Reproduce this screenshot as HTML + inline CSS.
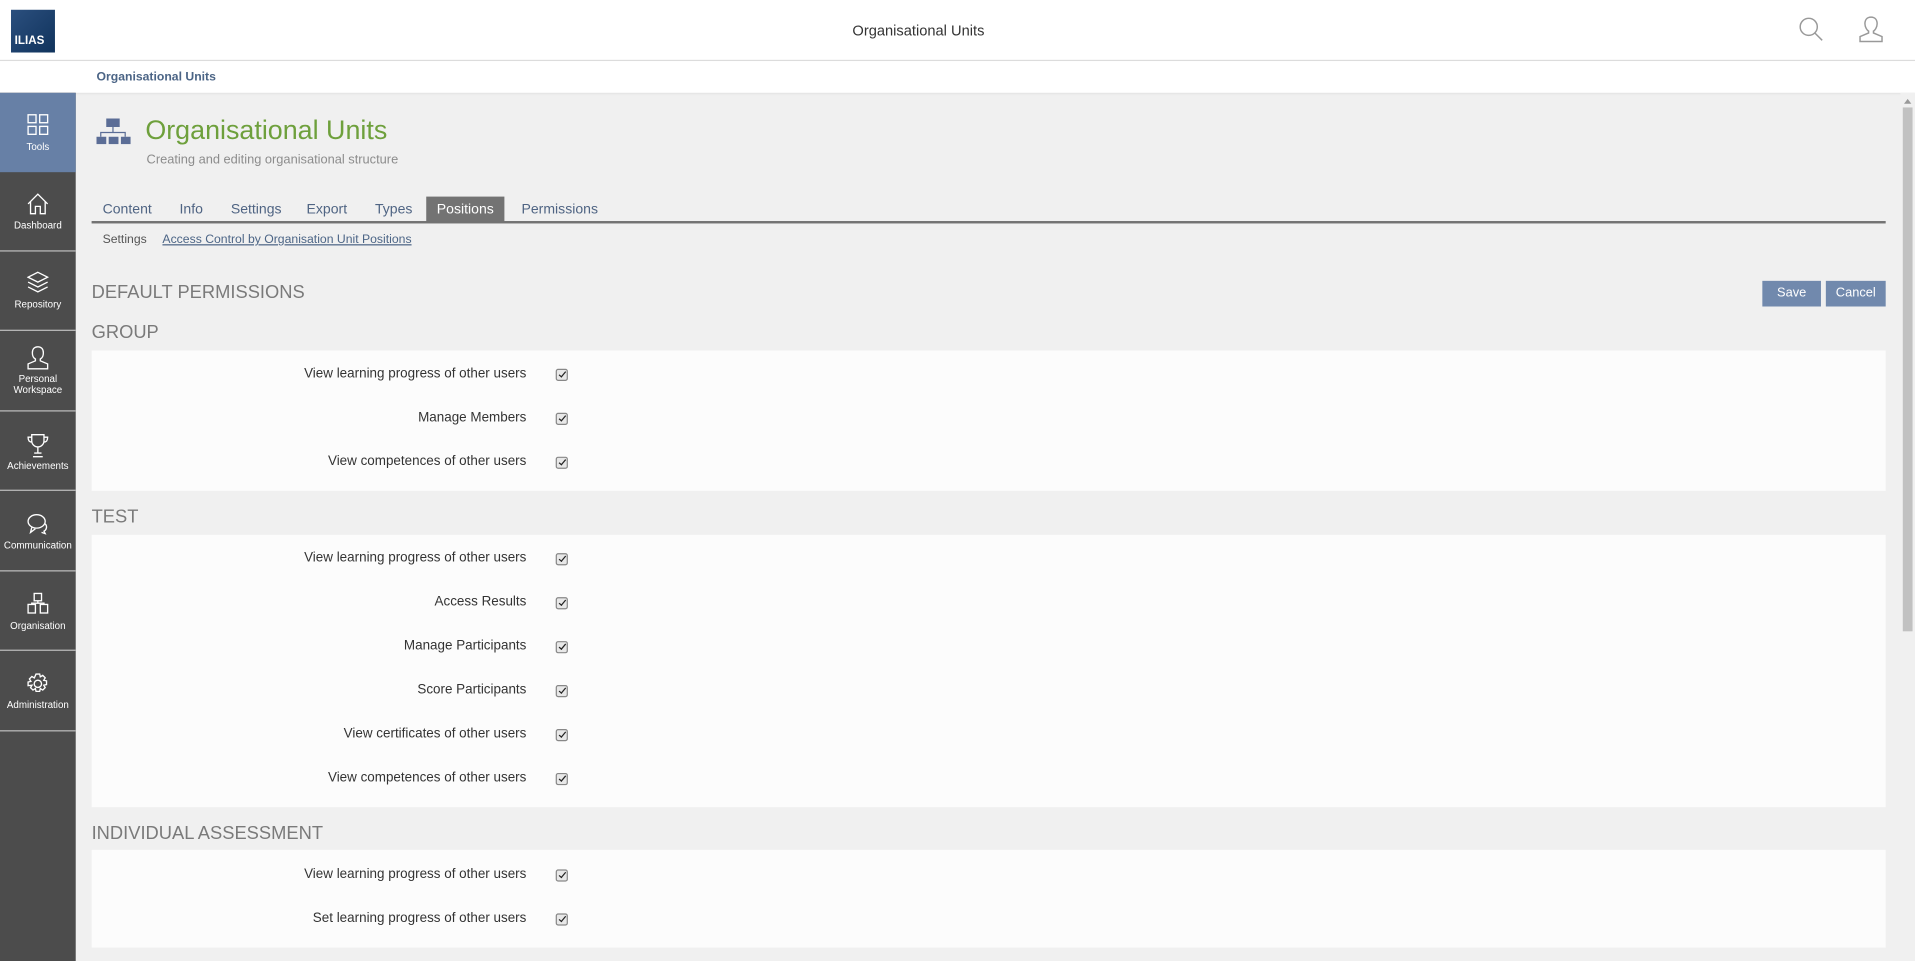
<!DOCTYPE html>
<html><head><meta charset="utf-8"><style>
html,body{margin:0;padding:0;width:1915px;height:961px;overflow:hidden;background:#f0f0f0}
#w{position:absolute;left:0;top:0;width:1568px;height:787px;transform:scale(1.2213,1.2211);transform-origin:0 0;font-family:"Liberation Sans",sans-serif;background:#f0f0f0;overflow:hidden}
.a{position:absolute}
.hdr{left:0;top:0;width:1568px;height:49px;background:#fff;border-bottom:1px solid #dcdcdc}
.bc{left:0;top:50px;width:1568px;height:26px;background:#fff;box-shadow:0 1px 2px rgba(0,0,0,.08)}
.sb{left:0;top:76px;width:62px;height:711px;background:#4c4c4c}
.it{position:absolute;left:0;width:62px;height:64px;border-bottom:1px solid #bdbdbd;color:#fff;font-size:8px;text-align:center}
.it svg{display:block;margin:0 auto}
.tab{position:absolute;top:161px;height:21px;line-height:23px;font-size:11.5px;color:#4f6483}
.sec{position:absolute;left:75px;font-size:15px;color:#7a7a7a}
.pn{position:absolute;left:75px;width:1469px;background:#fcfcfc}
.row{position:absolute;left:0;width:356px;text-align:right;font-size:11px;color:#333}
.cb{position:absolute;left:380px;width:8px;height:8px;border:1px solid #888;border-radius:2px;background:#e8e8e8}
.cb:after{content:"";position:absolute;left:2.5px;top:-0.5px;width:2px;height:5px;border:solid #222;border-width:0 1.8px 1.8px 0;transform:rotate(40deg)}
.btn{position:absolute;top:230px;height:21px;line-height:21px;background:#7189ad;color:#fff;font-size:10.5px;text-align:center}
</style></head><body><div id="w">
<div class="a hdr"></div>
<div class="a" style="left:9px;top:8px;width:36px;height:35px;background:linear-gradient(135deg,#2b4f7e,#10335c)"><span class="a" style="left:3px;top:20px;color:#fff;font-size:9.5px;font-weight:bold">ILIAS</span></div>
<div class="a" style="left:0;width:1504px;top:18px;text-align:center;font-size:12px;color:#333">Organisational Units</div>
<svg class="a" style="left:1472px;top:13px" width="22" height="22" viewBox="0 0 22 22" fill="none" stroke="#999" stroke-width="1.2"><circle cx="9" cy="9" r="7"/><path d="M14 14l6 6"/></svg>
<svg class="a" style="left:1521px;top:12px" width="22" height="24" viewBox="0 0 22 24" fill="none" stroke="#999" stroke-width="1.2"><path d="M11 2c-3.5 0-5 2.5-5 5.5 0 3 2 5.5 3 6v1.5L2 18v4h18v-4l-7-3v-1.5c1-.5 3-3 3-6C16 4.5 14.5 2 11 2z"/></svg>
<div class="a bc"></div>
<div class="a" style="left:79px;top:58px;font-size:10px;font-weight:bold;color:#4c6586">Organisational Units</div>
<div class="a sb">
<div class="it" style="top:0;background:#6780a6;height:65px;border:0"><svg style="margin-top:17px" width="18" height="18" viewBox="0 0 18 18" fill="none" stroke="#fff" stroke-width="1.1"><rect x="1" y="1" width="6.5" height="6.5"/><rect x="10.5" y="1" width="6.5" height="6.5"/><rect x="1" y="10.5" width="6.5" height="6.5"/><rect x="10.5" y="10.5" width="6.5" height="6.5"/></svg><div style="margin-top:5px">Tools</div></div>
<div class="it" style="top:65px"><svg style="margin-top:17px" width="18" height="18" viewBox="0 0 18 18" fill="none" stroke="#fff" stroke-width="1.1"><path d="M1 9L9 1l8 8M3 7v10h4v-6h4v6h4V7"/></svg><div style="margin-top:4px">Dashboard</div></div>
<div class="it" style="top:130px"><svg style="margin-top:16px" width="18" height="20" viewBox="0 0 18 20" fill="none" stroke="#fff" stroke-width="1.1"><path d="M9 1l8 4-8 4-8-4zM1 9l8 4 8-4M1 13l8 4 8-4"/></svg><div style="margin-top:3px">Repository</div></div>
<div class="it" style="top:196px"><svg style="margin-top:11px" width="18" height="20" viewBox="0 0 18 20" fill="none" stroke="#fff" stroke-width="1.1"><path d="M9 1c-3 0-4.5 2-4.5 5s1.5 4.5 2.5 5v1.5L1 15v4h16v-4l-6-2.5V11c1-.5 2.5-2 2.5-5S12 1 9 1z"/></svg><div style="margin-top:3px;line-height:9px">Personal<br>Workspace</div></div>
<div class="it" style="top:261px"><svg style="margin-top:18px" width="18" height="20" viewBox="0 0 18 20" fill="none" stroke="#fff" stroke-width="1.1"><path d="M4 1h10v5a5 5 0 0 1-10 0zM4 3H1c0 3 1 4 3 4M14 3h3c0 3-1 4-3 4M9 11v5M5 19h8M6 16h6"/></svg><div style="margin-top:2px">Achievements</div></div>
<div class="it" style="top:327px"><svg style="margin-top:17px" width="18" height="18" viewBox="0 0 18 18" fill="none" stroke="#fff" stroke-width="1.1"><ellipse cx="8" cy="7" rx="7" ry="5.5"/><path d="M4 12l-1 4 4-3M15 9c2 2 1 5-1 6l1 2-3-1"/></svg><div style="margin-top:4px">Communication</div></div>
<div class="it" style="top:392px"><svg style="margin-top:17px" width="18" height="18" viewBox="0 0 18 18" fill="none" stroke="#fff" stroke-width="1.1"><rect x="6" y="1" width="6" height="6"/><rect x="1" y="10" width="6" height="7"/><rect x="11" y="10" width="6" height="7"/><path d="M9 7v2M4 10V9h10v1"/></svg><div style="margin-top:5px">Organisation</div></div>
<div class="it" style="top:458px"><svg style="margin-top:17px" width="18" height="18" viewBox="0 0 18 18" fill="none" stroke="#fff" stroke-width="1.1"><circle cx="9" cy="9" r="3"/><path d="M7.5 1h3l.5 2.3 2-1.2 2 2-1.2 2 2.3.5v3l-2.3.5 1.2 2-2 2-2-1.2-.5 2.3h-3l-.5-2.3-2 1.2-2-2 1.2-2L1 10.5v-3l2.3-.5-1.2-2 2-2 2 1.2z"/></svg><div style="margin-top:4px">Administration</div></div>
</div>
<div class="a" style="left:1556px;top:76px;width:12px;height:711px;background:#f0f0f0"></div>
<div class="a" style="left:1559px;top:81px;width:0;height:0;border:3px solid transparent;border-bottom:4px solid #999;border-top:0"></div>
<div class="a" style="left:1558px;top:88px;width:8px;height:429px;background:#c1c1c1"></div>
<svg class="a" style="left:79px;top:97px" width="28" height="22" viewBox="0 0 28 22" fill="#5b6d96"><rect x="8" y="0" width="11" height="7"/><rect x="0" y="15" width="8" height="6"/><rect x="10" y="15" width="8" height="6"/><rect x="20" y="15" width="8" height="6"/><path d="M13 7h1v4h10v4h-1v-3H4v3H3v-4h10z"/></svg>
<div class="a" style="left:119px;top:94px;font-size:22px;color:#6ea03c">Organisational Units</div>
<div class="a" style="left:120px;top:125px;font-size:10.5px;color:#8c8c8c">Creating and editing organisational structure</div>
<div class="tab" style="left:84px">Content</div>
<div class="tab" style="left:147px">Info</div>
<div class="tab" style="left:189px">Settings</div>
<div class="tab" style="left:251px">Export</div>
<div class="tab" style="left:307px">Types</div>
<div class="tab" style="left:349px;width:64px;background:#737373;color:#fff;text-align:center">Positions</div>
<div class="tab" style="left:427px">Permissions</div>
<div class="a" style="left:75px;top:181px;width:1469px;height:2px;background:#737373"></div>
<div class="a" style="left:84px;top:191px;font-size:10px;color:#555">Settings</div>
<div class="a" style="left:133px;top:191px;font-size:10px;color:#4c6586;text-decoration:underline">Access Control by Organisation Unit Positions</div>
<div class="sec" style="top:231px">DEFAULT PERMISSIONS</div>
<div class="btn" style="left:1443px;width:48px">Save</div>
<div class="btn" style="left:1495px;width:49px">Cancel</div>
<div class="sec" style="top:264px">GROUP</div>
<div class="pn" style="top:287px;height:115px">
<div class="row" style="top:13px">View learning progress of other users</div><div class="cb" style="top:15px"></div>
<div class="row" style="top:49px">Manage Members</div><div class="cb" style="top:51px"></div>
<div class="row" style="top:85px">View competences of other users</div><div class="cb" style="top:87px"></div>
</div>
<div class="sec" style="top:415px">TEST</div>
<div class="pn" style="top:438px;height:223px">
<div class="row" style="top:13px">View learning progress of other users</div><div class="cb" style="top:15px"></div>
<div class="row" style="top:49px">Access Results</div><div class="cb" style="top:51px"></div>
<div class="row" style="top:85px">Manage Participants</div><div class="cb" style="top:87px"></div>
<div class="row" style="top:121px">Score Participants</div><div class="cb" style="top:123px"></div>
<div class="row" style="top:157px">View certificates of other users</div><div class="cb" style="top:159px"></div>
<div class="row" style="top:193px">View competences of other users</div><div class="cb" style="top:195px"></div>
</div>
<div class="sec" style="top:674px">INDIVIDUAL ASSESSMENT</div>
<div class="pn" style="top:696px;height:80px">
<div class="row" style="top:14px">View learning progress of other users</div><div class="cb" style="top:16px"></div>
<div class="row" style="top:50px">Set learning progress of other users</div><div class="cb" style="top:52px"></div>
</div>
</div></body></html>
